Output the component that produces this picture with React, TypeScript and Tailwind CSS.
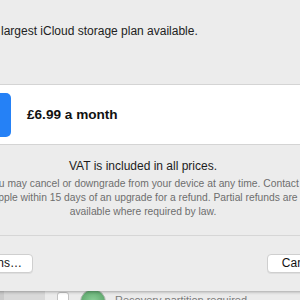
export default function App() {
  return (
    <div className="w-[300px] h-[300px] overflow-hidden bg-[#ebebeb] font-['Liberation_Sans',Arial,sans-serif]">
      {/* Sheet dialog, wider than the viewport */}
      <div className="relative z-10 ml-[-137px] flex h-[291px] w-[560px] flex-col bg-[#ececec] shadow-[0_1px_3px_rgba(0,0,0,0.3)]">
        <div className="h-[85px] border-b border-[#d4d4d4] pl-[138px] pt-[24px] text-[12px] leading-[14px] text-[#222] whitespace-nowrap">
          largest iCloud storage plan available.
        </div>

        {/* Selected plan */}
        <div className="flex h-[60px] items-center border-b border-[#d4d4d4] bg-white pl-[127px]">
          <div className="h-[44px] w-[21px] rounded-[5px] bg-[#2581f6]" />
          <span className="ml-[16px] mt-[2px] text-[13.6px] font-bold text-[#111] whitespace-nowrap">£6.99 a month</span>
        </div>

        {/* Info */}
        <div className="flex h-[91px] flex-col items-center border-b border-[#d6d6d6] pt-[14px]">
          <p className="text-[12px] leading-[14px] text-[#1d1d1d] whitespace-nowrap">VAT is included in all prices.</p>
          <div className="mt-[4px] flex flex-col items-center text-[10.3px] leading-[14px] text-[#6e6e6e] whitespace-nowrap">
            <span>You may cancel or downgrade from your device at any time. Contact</span>
            <span className="ml-[3px]">Apple within 15 days of an upgrade for a refund. Partial refunds are</span>
            <span>available where required by law.</span>
          </div>
        </div>

        {/* Buttons */}
        <div className="flex pl-[30px] pt-[18px]">
          <button className="h-[19px] w-[140px] rounded-[4px] border border-[#cfcfcf] bg-white text-[12px] leading-[17px] text-[#111] shadow-[0_1px_0_rgba(0,0,0,0.06)] whitespace-nowrap">
            Downgrade Options…
          </button>
          <button className="ml-[234px] h-[19px] w-[67px] rounded-[4px] border border-[#cfcfcf] bg-white text-[12px] leading-[17px] text-[#111] shadow-[0_1px_0_rgba(0,0,0,0.06)]">
            Cancel
          </button>
          <button className="ml-[12px] h-[19px] w-[60px] rounded-[4px] border border-[#cfcfcf] bg-white text-[12px] leading-[17px] text-[#111]">
            Buy
          </button>
        </div>
      </div>

      {/* Window behind the sheet */}
      <div className="flex h-[9px] overflow-hidden">
        <div className="w-[4px] shrink-0 bg-[#cbcbcb]" />
        <div className="w-[41px] shrink-0 bg-[#d9d9d9]" />
        <div className="flex flex-1 items-start bg-[#ebebeb] pl-[12px]">
          <div className="mt-[1px] h-[12px] w-[12px] shrink-0 rounded-[3px] border border-[#c2c2c2] bg-white" />
          <div className="ml-[11px] mt-[-2px] h-[26px] w-[26px] shrink-0 rounded-full border border-[#a9b3aa] bg-[radial-gradient(circle,#8fd19b,#4f9c5f)]" />
          <span className="ml-[9px] mt-[3px] text-[11px] leading-[13px] text-[#7a7a7a] whitespace-nowrap">Recovery partition required</span>
        </div>
      </div>
    </div>
  );
}
